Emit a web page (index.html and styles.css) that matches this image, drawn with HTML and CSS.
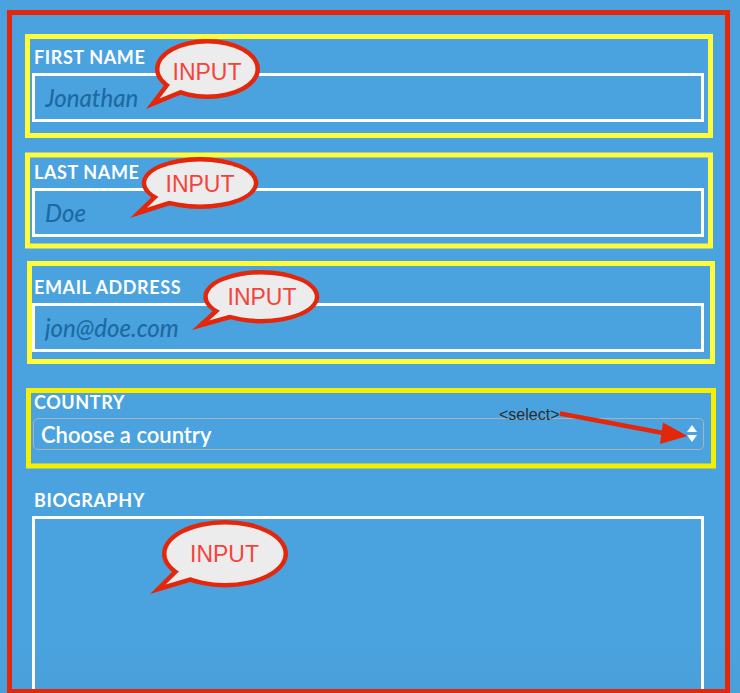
FILE: index.html
```html
<!DOCTYPE html>
<html lang="en">
<head>
<meta charset="utf-8">
<title>Form</title>
<link rel="stylesheet" href="styles.css">
</head>
<body>
<form class="form">
  <div class="field">
    <label class="label" for="first">FIRST NAME</label>
    <input class="text-input" id="first" type="text" placeholder="Jonathan">
  </div>
  <div class="field">
    <label class="label" for="last">LAST NAME</label>
    <input class="text-input" id="last" type="text" placeholder="Doe">
  </div>
  <div class="field">
    <label class="label" for="email">EMAIL ADDRESS</label>
    <input class="text-input" id="email" type="email" placeholder="jon@doe.com">
  </div>
  <div class="field">
    <label class="label" for="country">COUNTRY</label>
    <div class="select-wrap">
      <select class="select" id="country"><option>Choose a country</option></select>
      <svg class="select-arrows" width="12" height="20" viewBox="0 0 12 20" aria-hidden="true">
        <polygon points="6,1 11,8 1,8" fill="#fff"/>
        <polygon points="1,11 11,11 6,18" fill="#fff"/>
      </svg>
    </div>
  </div>
  <div class="field">
    <label class="label" for="bio">BIOGRAPHY</label>
    <textarea class="textarea" id="bio"></textarea>
  </div>
</form>

<svg class="annotations" width="740" height="693" viewBox="0 0 740 693" aria-hidden="true">
  <g fill="none" stroke-width="5">
    <rect class="hl" x="27.5" y="36.5" width="683" height="99"/>
    <rect class="hl" x="27.5" y="155" width="683" height="91"/>
    <rect class="hl" x="29.5" y="263.5" width="683" height="98"/>
    <rect class="hl hl-strong" x="28.5" y="390.5" width="685" height="75.5"/>
  </g>

  <!-- bubble 1 -->
  <g>
    <ellipse class="bub-out" cx="207.5" cy="69" rx="52.5" ry="30"/>
    <polygon class="bub-out" points="146,109 168,80 192,90"/>
    <ellipse class="bub-in" cx="207.5" cy="69" rx="48" ry="25.5"/>
    <polygon class="bub-in" points="159.5,98.6 172.7,81.2 187.1,87.2"/>
    <text class="bub-text" x="207" y="79.5">INPUT</text>
  </g>
  <!-- bubble 2 -->
  <g>
    <ellipse class="bub-out" cx="200" cy="183" rx="58.3" ry="26"/>
    <polygon class="bub-out" points="130,218 156.3,192.6 182.5,201.2"/>
    <ellipse class="bub-in" cx="200" cy="183" rx="53.8" ry="21.5"/>
    <polygon class="bub-in" points="147,207.8 162.8,192.6 178.5,197.7"/>
    <text class="bub-text" x="200" y="191.5">INPUT</text>
  </g>
  <!-- bubble 3 -->
  <g>
    <ellipse class="bub-out" cx="261.3" cy="296.7" rx="58" ry="26.7"/>
    <polygon class="bub-out" points="192,330 217.8,306.6 243.9,315.4"/>
    <ellipse class="bub-in" cx="261.3" cy="296.7" rx="53.5" ry="22.2"/>
    <polygon class="bub-in" points="209.1,320.5 224.6,306.5 240.2,311.7"/>
    <text class="bub-text" x="262" y="305">INPUT</text>
  </g>
  <!-- bubble 4 -->
  <g>
    <ellipse class="bub-out" cx="225" cy="553.7" rx="63" ry="33.7"/>
    <polygon class="bub-out" points="150,594 177.75,566.2 206.1,577.3"/>
    <ellipse class="bub-in" cx="225" cy="553.7" rx="58.5" ry="29.2"/>
    <polygon class="bub-in" points="165.7,584.6 182.4,567.9 199.4,574.6"/>
    <text class="bub-text" x="224.5" y="562">INPUT</text>
  </g>

  <!-- select annotation -->
  <text class="sel-text" x="499" y="419.5">&lt;select&gt;</text>
  <line class="arrow-line" x1="560" y1="413.5" x2="666" y2="433.5"/>
  <polygon class="arrow-head" points="687.5,436 663,422.5 660,444"/>
</svg>
</body>
</html>
```

FILE: styles.css
```css
html, body {
  margin: 0;
  padding: 0;
}

body {
  position: relative;
  width: 740px;
  height: 693px;
  overflow: hidden;
  background: linear-gradient(#4aa3df 0, #4aa3df 640px, #4a9fd8 693px);
  font-family: Lato, "Noto Sans", sans-serif;
}

.form {
  box-sizing: border-box;
  width: 723px;
  height: 684px;
  margin: 10px 0 0 7px;
  padding: 32px 21px 0 20px;
  border: 5px solid #e4260a;
  overflow: hidden;
}

.field {
  margin-bottom: 40px;
}

.label {
  display: block;
  margin: 0 0 6px 2px;
  font-family: Lato, sans-serif;
  font-weight: 700;
  font-size: 18px;
  line-height: 20px;
  letter-spacing: 0.6px;
  color: #ffffff;
}

.text-input {
  display: block;
  box-sizing: border-box;
  width: 672px;
  height: 49px;
  margin: 0;
  padding: 0 10px;
  border: 3px solid #ffffff;
  border-radius: 0;
  background: transparent;
  font-family: Lato, sans-serif;
  font-style: italic;
  font-weight: 500;
  font-size: 24px;
  color: #1d6aa3;
  outline: none;
}

.text-input::placeholder {
  color: #1d6aa3;
  opacity: 1;
  font-style: italic;
}

.select-wrap {
  position: relative;
  width: 671px;
  margin-left: 1px;
}

.select {
  display: block;
  box-sizing: border-box;
  width: 100%;
  height: 32px;
  margin: 0;
  padding: 0 30px 0 7px;
  border: 1px solid #a9b3bd;
  border-radius: 5px;
  background: transparent;
  -webkit-appearance: none;
  appearance: none;
  font-family: Lato, sans-serif;
  font-weight: 600;
  font-size: 22px;
  color: #ffffff;
  outline: none;
}

.select-arrows {
  position: absolute;
  right: 6px;
  top: 6px;
}

.textarea {
  display: block;
  box-sizing: border-box;
  width: 672px;
  height: 260px;
  margin: 0;
  padding: 8px 10px;
  border: 3px solid #ffffff;
  border-radius: 0;
  background: transparent;
  resize: none;
  font-family: Lato, sans-serif;
  font-size: 20px;
  color: #ffffff;
  outline: none;
}

.annotations {
  position: absolute;
  left: 0;
  top: 0;
  pointer-events: none;
}

.hl {
  stroke: #fffb3a;
}

.hl-strong {
  stroke: #f6ee00;
}

.bub-out {
  fill: #e4260a;
}

.bub-in {
  fill: #ececec;
}

.bub-text {
  font-family: "Liberation Sans", Arial, sans-serif;
  font-size: 23px;
  fill: #f5433b;
  text-anchor: middle;
}

.sel-text {
  font-family: "Liberation Sans", Arial, sans-serif;
  font-size: 16px;
  fill: #2b2b2b;
}

.arrow-line {
  stroke: #e4260a;
  stroke-width: 4.5;
}

.arrow-head {
  fill: #e4260a;
}
```
